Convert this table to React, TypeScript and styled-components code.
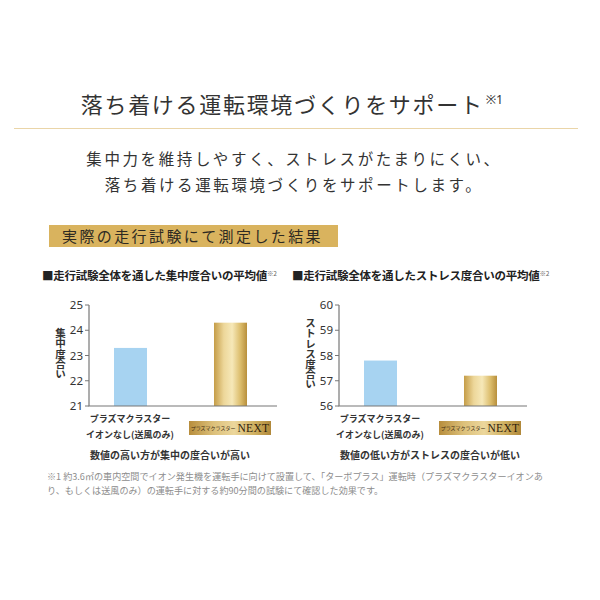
import React from 'react';
import styled, { createGlobalStyle } from 'styled-components';

const GlobalStyle = createGlobalStyle`
  html, body {
    margin: 0;
    padding: 0;
    background: #fff;
  }
  body {
    font-family: "Noto Sans CJK JP", "Noto Sans", sans-serif;
    color: #333;
  }
`;

type ChartData = {
  heading: string;
  yLabel: string;
  ticks: number[];
  values: [number, number];
  caption: string;
};

const charts: ChartData[] = [
  {
    heading: '■走行試験全体を通した集中度合いの平均値',
    yLabel: '集中度合い',
    ticks: [21, 22, 23, 24, 25],
    values: [23.3, 24.3],
    caption: '数値の高い方が集中の度合いが高い',
  },
  {
    heading: '■走行試験全体を通したストレス度合いの平均値',
    yLabel: 'ストレス度合い',
    ticks: [56, 57, 58, 59, 60],
    values: [57.8, 57.2],
    caption: '数値の低い方がストレスの度合いが低い',
  },
];

// plot geometry (svg coords, svg starts 26px into the chart)
const AXIS_X = 23;
const AXIS_TOP = 8;
const AXIS_BOTTOM = 109;
const AXIS_RIGHT = 211;
const BAR_W = 33;
const BAR_X = [48, 148];
const PLOT_H = 120;

export default function App() {
  return (
    <>
      <GlobalStyle />
      <Page>
        <TitleBlock>
          <Title>
            落ち着ける運転環境づくりをサポート<TitleNote>※1</TitleNote>
          </Title>
        </TitleBlock>

        <Lead>
          集中力を維持しやすく、ストレスがたまりにくい、
          <br />
          落ち着ける運転環境づくりをサポートします。
        </Lead>

        <LabelRow>
          <GoldLabel>実際の走行試験にて測定した結果</GoldLabel>
        </LabelRow>

        <ChartsRow>
          {charts.map((c) => (
            <Chart key={c.heading} data={c} />
          ))}
        </ChartsRow>

        <Footnote>
          ※1 約3.6㎡の車内空間でイオン発生機を運転手に向けて設置して、「ターボプラス」運転時（プラズマクラスターイオンあ
          <br />
          り、もしくは送風のみ）の運転手に対する約90分間の試験にて確認した効果です。
        </Footnote>
      </Page>
    </>
  );
}

const Chart = ({ data }: { data: ChartData }) => {
  const min = data.ticks[0];
  const max = data.ticks[data.ticks.length - 1];
  const scale = (v: number) =>
    AXIS_BOTTOM - ((v - min) / (max - min)) * (AXIS_BOTTOM - AXIS_TOP);

  return (
    <ChartBox>
      <ChartHeading>
        {data.heading}
        <HeadingNote>※2</HeadingNote>
      </ChartHeading>

      <PlotRow>
        <YLabel>{data.yLabel}</YLabel>
        <svg width="224" height={PLOT_H} viewBox={`0 0 224 ${PLOT_H}`}>
          <defs>
            <linearGradient id="goldBar" x1="0" x2="1" y1="0" y2="0">
              <stop offset="0" stopColor="#c59d48" />
              <stop offset="0.3" stopColor="#edd79a" />
              <stop offset="0.55" stopColor="#f6e8b8" />
              <stop offset="0.8" stopColor="#dcbd6c" />
              <stop offset="1" stopColor="#b88f3c" />
            </linearGradient>
          </defs>
          {data.ticks.map((t) => (
            <g key={t}>
              <line
                x1={AXIS_X - 4}
                x2={AXIS_X}
                y1={scale(t)}
                y2={scale(t)}
                stroke="#777"
                strokeWidth="1"
              />
              <text
                x={AXIS_X - 6}
                y={scale(t) + 4}
                textAnchor="end"
                fontSize="11.5"
                fill="#333"
                fontFamily='"Noto Sans", "Liberation Sans", sans-serif'
              >
                {t}
              </text>
            </g>
          ))}
          <rect
            x={BAR_X[0]}
            y={scale(data.values[0])}
            width={BAR_W}
            height={AXIS_BOTTOM - scale(data.values[0])}
            fill="#a7d3f1"
          />
          <rect
            x={BAR_X[1]}
            y={scale(data.values[1])}
            width={BAR_W}
            height={AXIS_BOTTOM - scale(data.values[1])}
            fill="url(#goldBar)"
          />
          <polyline
            points={`${AXIS_X},${AXIS_TOP} ${AXIS_X},${AXIS_BOTTOM} ${AXIS_RIGHT},${AXIS_BOTTOM}`}
            fill="none"
            stroke="#777"
            strokeWidth="1.2"
          />
        </svg>
      </PlotRow>

      <Categories>
        <Category>
          プラズマクラスター
          <br />
          イオンなし(送風のみ)
        </Category>
        <Category>
          <NextBadge>
            <BadgeSmall>プラズマクラスター</BadgeSmall>
            <BadgeNext>NEXT</BadgeNext>
          </NextBadge>
        </Category>
      </Categories>

      <Caption>{data.caption}</Caption>
    </ChartBox>
  );
};

const Page = styled.div`
  width: 600px;
  height: 600px;
  padding-top: 84px;
  box-sizing: border-box;
  display: flex;
  flex-direction: column;
`;

const TitleBlock = styled.div`
  margin: 0 22px 0 14px;
  padding-bottom: 9px;
  border-bottom: 1px solid #ead5a8;
  display: flex;
  justify-content: center;
`;

const Title = styled.h1`
  margin: 0 8px 0 0;
  font-size: 22px;
  line-height: 31px;
  font-weight: 400;
  letter-spacing: 1.7px;
  color: #333;
`;

const TitleNote = styled.span`
  font-family: "Noto Sans", "Noto Sans CJK JP", sans-serif;
  font-size: 12.5px;
  vertical-align: 9px;
  margin-left: 2px;
  letter-spacing: 0;
`;

const Lead = styled.p`
  margin: 16px 0 0;
  padding-right: 12px;
  text-align: center;
  font-size: 15.5px;
  line-height: 26px;
  letter-spacing: 2.6px;
  color: #333;
`;

const LabelRow = styled.div`
  margin-top: 28px;
  padding-left: 49px;
  display: flex;
`;

const GoldLabel = styled.div`
  width: 289px;
  height: 22px;
  box-sizing: border-box;
  padding-left: 13px;
  background: #d9b35e;
  color: #2e2a22;
  font-size: 15px;
  line-height: 22px;
  letter-spacing: 2.4px;
  white-space: nowrap;
`;

const ChartsRow = styled.div`
  margin-top: 18px;
  padding-left: 40px;
  display: flex;
`;

const ChartBox = styled.div`
  width: 250px;
  display: flex;
  flex-direction: column;
`;

const ChartHeading = styled.div`
  margin-left: 2px;
  font-size: 11.5px;
  line-height: 16px;
  font-weight: 700;
  color: #222;
  white-space: nowrap;
  letter-spacing: -0.25px;
`;

const HeadingNote = styled.span`
  font-size: 6.5px;
  font-weight: 400;
  color: #666;
  vertical-align: 4px;
`;

const PlotRow = styled.div`
  margin-top: 14px;
  display: flex;
  align-items: flex-start;
`;

const YLabel = styled.div`
  width: 26px;
  height: ${PLOT_H - 6}px;
  display: flex;
  align-items: center;
  justify-content: center;
  padding: 0 0 0 14px;
  box-sizing: border-box;
  writing-mode: vertical-rl;
  font-size: 10.5px;
  line-height: 12px;
  font-weight: 700;
  color: #333;
  letter-spacing: -0.3px;
`;

const Categories = styled.div`
  margin: -6px 0 0 40px;
  display: grid;
  grid-template-columns: 100px 100px;
  align-items: center;
`;

const Category = styled.div`
  display: flex;
  justify-content: center;
  text-align: center;
  font-size: 9px;
  line-height: 16px;
  font-weight: 700;
  color: #333;
  white-space: nowrap;
`;

const NextBadge = styled.div`
  width: 82px;
  height: 14px;
  margin-top: 2px;
  display: flex;
  align-items: center;
  justify-content: center;
  gap: 2px;
  background: linear-gradient(
    90deg,
    #b78d3c 0%,
    #dcc07a 30%,
    #ecd79c 55%,
    #d0b060 80%,
    #b0883a 100%
  );
`;

const BadgeSmall = styled.span`
  font-size: 5px;
  line-height: 14px;
  font-weight: 400;
  color: #3b2c12;
`;

const BadgeNext = styled.span`
  font-family: "Liberation Serif", "DejaVu Serif", serif;
  font-size: 11.5px;
  line-height: 14px;
  font-weight: 400;
  color: #2d200c;
  letter-spacing: 0.3px;
`;

const Caption = styled.div`
  margin-top: 5px;
  margin-left: 50px;
  font-size: 10px;
  line-height: 14px;
  font-weight: 700;
  color: #333;
  white-space: nowrap;
`;

const Footnote = styled.p`
  margin: 7px 0 0 47px;
  font-size: 9.1px;
  line-height: 14px;
  color: #8d8d8d;
  white-space: nowrap;
`;
